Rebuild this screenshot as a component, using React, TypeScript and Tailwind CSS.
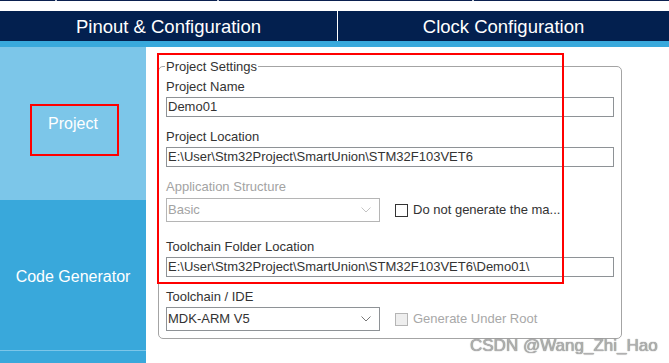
import React from "react";

const font = { fontFamily: '"Liberation Sans", Arial, sans-serif' };

function Chevron({ color }: { color: string }) {
  return (
    <svg width="10" height="6" viewBox="0 0 10 6" className="shrink-0">
      <polyline points="0.5,0.5 5,5 9.5,0.5" fill="none" stroke={color} strokeWidth="1" />
    </svg>
  );
}

function TextField({ value }: { value: string }) {
  return (
    <div className="h-[20px] w-[448px] border border-[#8e9296] bg-white px-[1px] text-[13px] leading-[18px] text-[#333]">
      {value}
    </div>
  );
}

function Label({ children, disabled }: { children: React.ReactNode; disabled?: boolean }) {
  return (
    <div className={`h-[16px] text-[13px] leading-[16px] ${disabled ? "text-[#a3a3a3]" : "text-[#333]"}`}>
      {children}
    </div>
  );
}

export default function App() {
  return (
    <div className="relative h-[363px] w-[669px] overflow-hidden bg-white" style={font}>
      {/* leftover tab edge */}
      <div className="flex h-[11px] items-start">
        <div className="h-[1px] w-[55px] bg-[#0b2050]" />
        <div className="h-[1px] w-[2px] bg-[#c9d0dc]" />
        <div className="h-[1px] w-[160px] bg-[#0b2050]" />
        <div className="h-[1px] w-[2px] bg-[#c9d0dc]" />
        <div className="h-[1px] w-[253px] bg-[#0b2050]" />
        <div className="h-[1px] w-[2px] bg-[#c9d0dc]" />
        <div className="h-[1px] flex-1 bg-[#0b2050]" />
      </div>

      {/* tab bar */}
      <div className="flex h-[30px] bg-[#03204f] text-[18.5px] text-white">
        <div className="flex w-[338px] items-center justify-center border-r border-white pt-[1px]">
          Pinout &amp; Configuration
        </div>
        <div className="flex flex-1 items-center justify-center pt-[1px]">Clock Configuration</div>
      </div>
      <div className="h-[6px] bg-[#39a9dc]" />

      <div className="flex h-[316px]">
        {/* sidebar */}
        <div className="flex w-[146px] flex-col text-[16px] text-white">
          <div className="flex h-[153px] items-center justify-center bg-[#7cc6e9] pt-[1px]">Project</div>
          <div className="flex h-[150px] items-center justify-center bg-[#39a8db] pt-[3px]">Code Generator</div>
          <div className="h-[1px] bg-[#7cc6e9]" />
          <div className="flex-1 bg-[#39a8db]" />
        </div>

        {/* content */}
        <div className="flex-1 pl-[12px] pt-[12px]">
          <fieldset className="w-[464px] rounded-[5px] border border-[#a4a4a4] px-[7px] pb-[7px]">
            <legend className="-ml-[1px] px-[1px] text-[13px] leading-[15px] text-[#333]">Project Settings</legend>
            <div className="mt-[5px]">
              <Label>Project Name</Label>
              <div className="mt-[2px]">
                <TextField value="Demo01" />
              </div>
            </div>
            <div className="mt-[12px]">
              <Label>Project Location</Label>
              <div className="mt-[2px]">
                <TextField value="E:\User\Stm32Project\SmartUnion\STM32F103VET6" />
              </div>
            </div>
            <div className="mt-[12px]">
              <Label disabled>Application Structure</Label>
              <div className="mt-[3px] flex items-center">
                <div className="flex h-[24px] w-[214px] items-center justify-between border border-[#b5b5b5] pl-[1px] pr-[8px] text-[13px] text-[#a3a3a3]">
                  <span>Basic</span>
                  <Chevron color="#c4c4c4" />
                </div>
                <div className="ml-[15px] h-[13px] w-[13px] border border-[#333] bg-white" />
                <span className="ml-[5px] text-[13px] text-[#333]">Do not generate the ma...</span>
              </div>
            </div>
            <div className="mt-[17px]">
              <Label>Toolchain Folder Location</Label>
              <div className="mt-[2px]">
                <TextField value="E:\User\Stm32Project\SmartUnion\STM32F103VET6\Demo01\" />
              </div>
            </div>
            <div className="mt-[12px]">
              <Label>Toolchain / IDE</Label>
              <div className="mt-[2px] flex items-center">
                <div className="flex h-[24px] w-[214px] items-center justify-between border border-[#8e9296] pl-[1px] pr-[8px] text-[13px] text-[#333]">
                  <span>MDK-ARM V5</span>
                  <Chevron color="#777" />
                </div>
                <div className="ml-[15px] h-[13px] w-[13px] border border-[#b5b5b5] bg-[#eeeeee]" />
                <span className="ml-[5px] text-[13px] text-[#a8a8a8]">Generate Under Root</span>
              </div>
            </div>
          </fieldset>
        </div>
      </div>

      {/* annotation boxes */}
      <div className="absolute left-[30px] top-[104px] h-[52px] w-[89px] border-2 border-[#ff0000]" />
      <div className="absolute left-[157px] top-[53px] h-[231px] w-[407px] border-2 border-[#ff0000]" />

      {/* watermark */}
      <div className="absolute left-[470px] top-[333px] text-[17px] font-light text-[#b0b0b0] [text-shadow:0_0_1px_#666]">
        CSDN @Wang_Zhi_Hao
      </div>
    </div>
  );
}
